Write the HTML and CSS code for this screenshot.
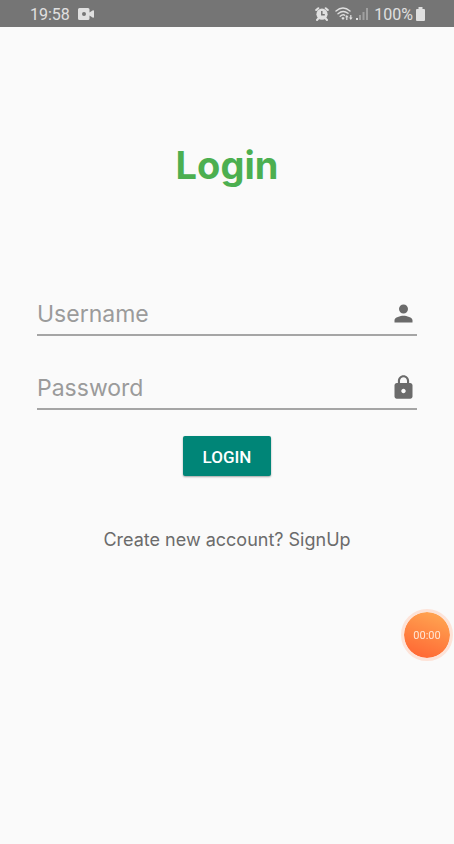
FILE: index.html
```html
<!DOCTYPE html>
<html lang="en">
<head>
  <meta charset="utf-8">
  <meta name="viewport" content="width=device-width, initial-scale=1">
  <title>Login</title>
  <link rel="stylesheet" href="styles.css">
</head>
<body>
  <header class="status">
    <div class="status-group">
      <span>19:58</span>
      <svg class="camera" width="16" height="12" viewBox="0 0 16 12" aria-hidden="true">
        <path fill="currentColor" fill-rule="evenodd" d="M1.500 0H10Q11.500 0 11.500 1.500V4.500L14.500 2.500Q16 2 16 3V9Q16 10 14.500 9.500L11.500 7.500V10.500Q11.500 12 10 12H1.500Q0 12 0 10.500V1.500Q0 0 1.500 0ZM6 4A2 2 0 1 0 6 8A2 2 0 1 0 6 4Z"/>
      </svg>
    </div>
    <div class="status-group status-right">
      <svg width="14" height="14" viewBox="0 0 14 14" aria-hidden="true">
        <circle cx="7" cy="7.200" r="5.600" fill="currentColor"/>
        <path fill="none" stroke="currentColor" stroke-width="2" stroke-linecap="round" d="M1.200 3 3.300 1.200M12.800 3 10.700 1.200M3.300 11.500 2 13M10.700 11.500 12 13"/>
        <path fill="none" stroke="#757575" stroke-width="1.500" d="M6.800 4V7.700H9.800"/>
      </svg>
      <svg width="18" height="14" viewBox="0 0 18 14" aria-hidden="true">
        <g fill="none" stroke="currentColor" stroke-width="1.400" stroke-linecap="round">
          <path d="M1 4Q8 -2 15 4M3 6.700Q8 2.500 13 6.300M5.200 9.200Q8 7 9.700 8.300"/>
        </g>
        <path fill="currentColor" d="M6.300 11 8 10 9.700 11 8 13ZM10 10.300 11.800 8 13.600 10.300H12.400V13H11.200V10.300ZM14 10.500H15.200V8H16.400V10.500H17.600L15.800 13Z"/>
      </svg>
      <svg width="12" height="14" viewBox="0 0 12 14" aria-hidden="true">
        <path fill="currentColor" d="M0 11H2V13H0Z"/>
        <path fill="currentColor" opacity=".4" d="M3 8H5V13H3ZM6.500 5H8.500V13H6.500ZM10 1H12V13H10Z"/>
      </svg>
      <span class="percent">100%</span>
      <svg width="9" height="14" viewBox="0 0 9 14" aria-hidden="true">
        <path fill="currentColor" d="M2.500 0H6.500V2H8Q9 2 9 3V13Q9 14 8 14H1Q0 14 0 13V3Q0 2 1 2H2.500Z"/>
      </svg>
    </div>
  </header>
  <main class="page">
    <h1 class="title">Login</h1>
    <form class="form">
      <div class="field">
        <input id="username" type="text" placeholder="Username" aria-label="Username" autocomplete="username">
        <label for="username" aria-label="Username">
          <svg width="27" height="27" viewBox="0 0 24 24" aria-hidden="true"><path fill="currentColor" d="M12 12c2.210 0 4-1.790 4-4s-1.790-4-4-4-4 1.790-4 4 1.790 4 4 4zm0 2c-2.670 0-8 1.340-8 4v2h16v-2c0-2.660-5.330-4-8-4z"/></svg>
        </label>
      </div>
      <div class="field">
        <input id="password" type="password" placeholder="Password" aria-label="Password" autocomplete="current-password">
        <label for="password" aria-label="Password">
          <svg width="27" height="27" viewBox="0 0 24 24" aria-hidden="true"><path fill="currentColor" d="M18 8h-1V6c0-2.760-2.240-5-5-5S7 3.240 7 6v2H6c-1.100 0-2 .9-2 2v10c0 1.100.9 2 2 2h12c1.100 0 2-.9 2-2V10c0-1.100-.9-2-2-2zm-6 9c-1.100 0-2-.9-2-2s.9-2 2-2 2 .9 2 2-.9 2-2 2zm3.100-9H8.900V6c0-1.710 1.390-3.100 3.100-3.100s3.100 1.390 3.100 3.100v2z"/></svg>
        </label>
      </div>
      <button class="submit" type="submit">LOGIN</button>
    </form>
    <a class="signup" href="#signup">Create new account? SignUp</a>
  </main>
  <button class="recorder" type="button">00:00</button>
</body>
</html>
```
FILE: styles.css
```css
* {
  box-sizing: border-box;
}

body {
  margin: 0;
  min-height: 100vh;
  background: #fafafa;
  font-family: Inter, sans-serif;
}

.status {
  display: flex;
  justify-content: space-between;
  align-items: center;
  height: 27px;
  padding: 3px 29px 0 30px;
  background: #757575;
  color: #e0e0e0;
  font: 16px/24px Roboto, sans-serif;
}

.status-group {
  display: flex;
  align-items: center;
  gap: 8px;
}

.status-group svg {
  margin-top: -2px;
}

.status-right {
  gap: 3px;
}

.status-right svg:first-child {
  margin-right: 3px;
}

.percent {
  margin-left: 3px;
}

.page {
  display: flex;
  flex-direction: column;
  align-items: center;
  padding: 108px 37px 40px;
}

.title {
  margin: 0;
  color: #4caf50;
  font-size: 38px;
  line-height: 60px;
  font-weight: 700;
}

.form {
  display: flex;
  flex-direction: column;
  align-items: center;
  width: 100%;
  margin-top: 98px;
}

.field {
  display: flex;
  align-items: center;
  width: 100%;
  height: 43px;
  margin-bottom: 31px;
  border-bottom: 2px solid #a5a5a5;
  color: #6b6b6b;
}

.field:nth-child(2) {
  margin-bottom: 26px;
}

.field input {
  flex: 1;
  min-width: 0;
  height: 40px;
  padding: 0;
  border: 0;
  outline: 0;
  background: transparent;
  color: #424242;
  font: 23px/40px Inter, sans-serif;
}

.field input::placeholder {
  color: #9b9b9b;
  opacity: 1;
}

.field label {
  display: flex;
}

.submit {
  height: 40px;
  padding: 2px 20px 0;
  border: 0;
  border-radius: 2px;
  background: #008577;
  box-shadow: 0 1px 2px #00000059;
  color: #fff;
  font: 500 17px/24px Roboto, sans-serif;
}

.signup {
  margin-top: 51px;
  color: #6b6b6b;
  font-size: 18px;
  line-height: 26px;
  text-decoration: none;
}

.recorder {
  position: fixed;
  right: 1px;
  top: 609px;
  width: 52px;
  height: 52px;
  padding: 2px 0 0;
  border: 3px solid #fde3d8;
  border-radius: 50%;
  background: linear-gradient(200deg, #ffb057, #ff5c2e) border-box;
  background-clip: padding-box;
  color: #ffe6d5;
  font: 11px/16px Roboto, sans-serif;
}
```
